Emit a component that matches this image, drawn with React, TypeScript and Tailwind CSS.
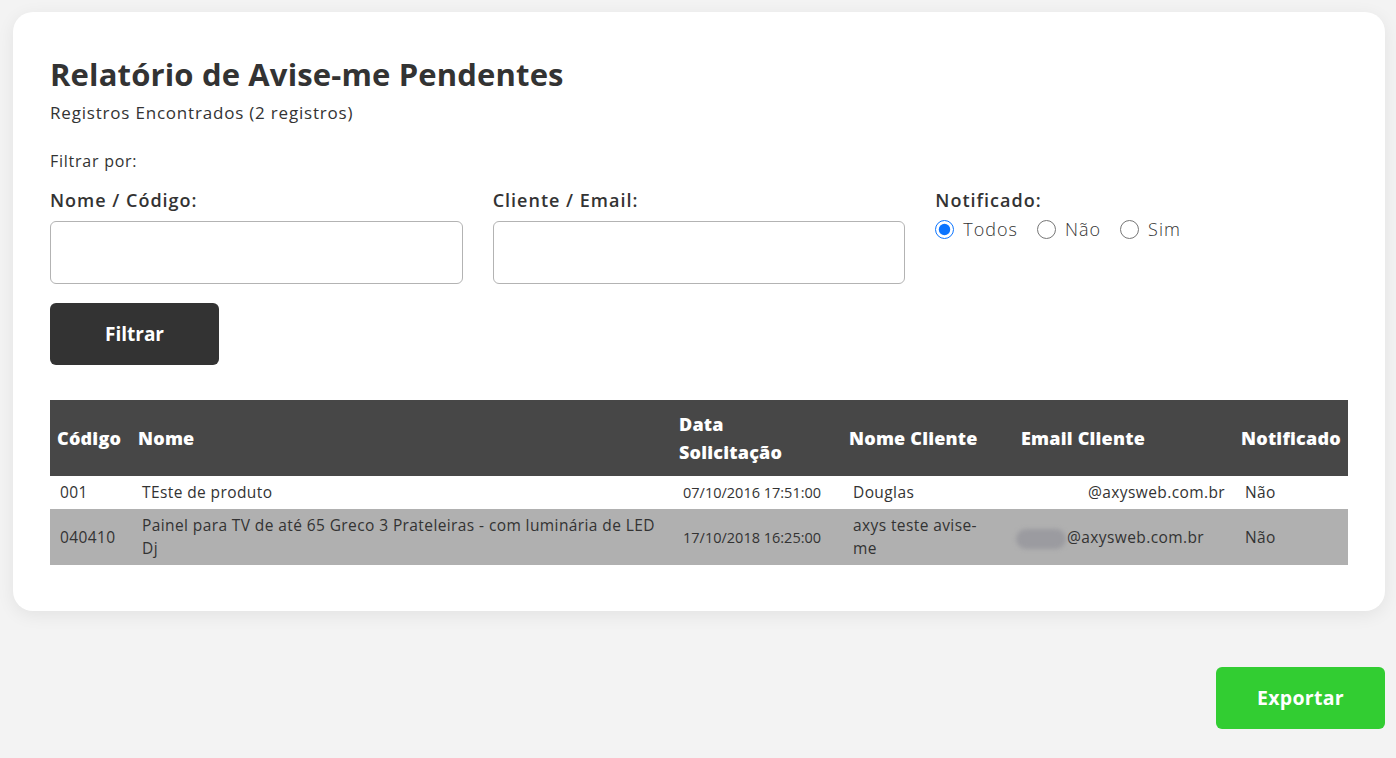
import { useState } from "react";

type Row = {
  codigo: string;
  nome: React.ReactNode;
  data: string;
  cliente: React.ReactNode;
  email: string;
  blur: boolean;
  notificado: string;
  shaded: boolean;
};

const ROWS: Row[] = [
  {
    codigo: "001",
    nome: "TEste de produto",
    data: "07/10/2016 17:51:00",
    cliente: "Douglas",
    email: "@axysweb.com.br",
    blur: false,
    notificado: "Não",
    shaded: false,
  },
  {
    codigo: "040410",
    nome: (
      <>
        Painel para TV de até 65 Greco 3 Prateleiras - com luminária de LED
        <br />
        Dj
      </>
    ),
    data: "17/10/2018 16:25:00",
    cliente: (
      <>
        axys teste avise-
        <br />
        me
      </>
    ),
    email: "@axysweb.com.br",
    blur: true,
    notificado: "Não",
    shaded: true,
  },
];

const FONT = { fontFamily: '"Open Sans", "Noto Sans", sans-serif' };

const cell = "px-[10px] py-[5px] text-[15.5px] leading-[23px] tracking-[0.4px]";

export default function App() {
  const [notificado, setNotificado] = useState("todos");

  return (
    <div className="min-h-[758px] bg-[#f3f3f3] pl-[13px] pr-[11px] pt-[12px] pb-[29px] text-[#333]" style={FONT}>
      <div className="rounded-[20px] bg-white px-[37px] pt-[42px] pb-[46px] shadow-[0_4px_18px_rgba(0,0,0,0.07)]">
        <h1 className="text-[31px] leading-[40px] font-bold tracking-[0.15px]">
          Relatório de Avise-me Pendentes
        </h1>
        <p className="mt-[6px] text-[17px] leading-[26px] tracking-[0.8px]">Registros Encontrados (2 registros)</p>

        <p className="mt-[23px] text-[16px] leading-[24px] tracking-[0.75px]">Filtrar por:</p>

        <div className="mt-[14px] grid grid-cols-3 gap-[30px]">
          <div className="flex flex-col">
            <label className="text-[18px] leading-[26px] font-semibold tracking-[1px]">Nome / Código:</label>
            <input
              type="text"
              className="mt-[8px] h-[63px] rounded-[6px] border border-[#b3b3b3] px-3 outline-none"
            />
          </div>
          <div className="flex flex-col">
            <label className="text-[18px] leading-[26px] font-semibold tracking-[1px]">Cliente / Email:</label>
            <input
              type="text"
              className="mt-[8px] h-[63px] rounded-[6px] border border-[#b3b3b3] px-3 outline-none"
            />
          </div>
          <div className="flex flex-col">
            <label className="text-[18px] leading-[26px] font-semibold tracking-[1px]">Notificado:</label>
            <div className="mt-[3px] flex items-center text-[18px] leading-[27px] font-light tracking-[1px]">
              {[
                { v: "todos", l: "Todos" },
                { v: "nao", l: "Não" },
                { v: "sim", l: "Sim" },
              ].map((o) => (
                <label key={o.v} className="mr-[19px] flex items-center gap-[9px] cursor-pointer">
                  <input
                    type="radio"
                    name="notificado"
                    checked={notificado === o.v}
                    onChange={() => setNotificado(o.v)}
                    className="m-0 h-[19px] w-[19px] accent-[#0b74ff]"
                  />
                  {o.l}
                </label>
              ))}
            </div>
          </div>
        </div>

        <button className="mt-[19px] h-[62px] w-[169px] rounded-[6px] bg-[#333] text-[19px] font-bold text-white">
          Filtrar
        </button>

        <table className="mt-[35px] w-full table-fixed border-collapse">
          <colgroup>
            <col className="w-[82px]" />
            <col className="w-[541px]" />
            <col className="w-[170px]" />
            <col className="w-[172px]" />
            <col className="w-[220px]" />
            <col />
          </colgroup>
          <thead>
            <tr className="bg-[#474747] text-left text-white">
              {[
                "Código",
                "Nome",
                <>
                  Data
                  <br />
                  Solicitação
                </>,
                "Nome Cliente",
                "Email Cliente",
                "Notificado",
              ].map((h, i) => (
                <th
                  key={i}
                  className={`h-[76px] ${i === 0 ? "px-[7px]" : "px-[6px]"} text-[18px] leading-[28px] font-extrabold tracking-[0.2px] whitespace-nowrap`}
                >
                  {h}
                </th>
              ))}
            </tr>
          </thead>
          <tbody>
            {ROWS.map((r) => (
              <tr key={r.codigo} className={r.shaded ? "bg-[#b0b0b0]" : "bg-white"}>
                <td className={cell}>{r.codigo}</td>
                <td className={cell}>{r.nome}</td>
                <td className="px-[10px] py-[5px] text-[14.5px] leading-[23px] whitespace-nowrap">
                  {r.data}
                </td>
                <td className={cell}>{r.cliente}</td>
                <td className={`${cell} whitespace-nowrap`}>
                  {r.blur ? (
                    <span className="relative inline-block h-[1px] w-[42px]">
                      <span className="absolute -left-[9px] -top-[13px] h-[20px] w-[50px] rounded-[10px] bg-[#9b9ba0] blur-[2px]" />
                    </span>
                  ) : (
                    <span className="inline-block w-[63px]" />
                  )}
                  {r.email}
                </td>
                <td className={cell}>{r.notificado}</td>
              </tr>
            ))}
          </tbody>
        </table>
      </div>

      <div className="mt-[56px] flex justify-end">
        <button className="h-[62px] w-[169px] rounded-[6px] bg-[#32cd32] text-[19.5px] font-bold tracking-[0.3px] text-white">
          Exportar
        </button>
      </div>
    </div>
  );
}
